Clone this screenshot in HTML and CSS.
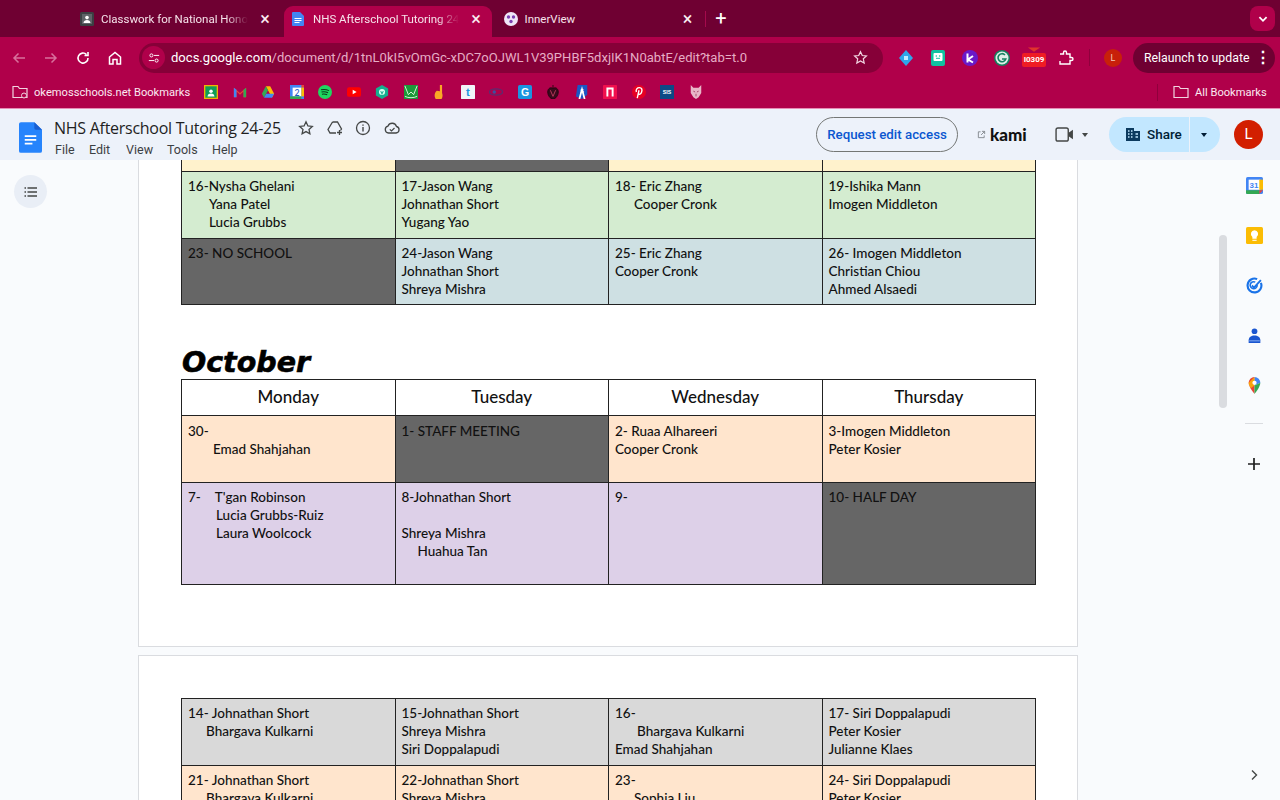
FILE: index.html
```html
<!DOCTYPE html>
<html lang="en">
<head>
<meta charset="utf-8">
<title>NHS Afterschool Tutoring 24-25</title>
<link rel="stylesheet" href="styles.css">
</head>
<body>
<div class="tabstrip">
  <div class="tab tab-first">
    <svg class="fav" viewBox="0 0 14 14"><rect width="14" height="14" rx="1.500" fill="#3c4043"/><rect x="2" y="2" width="10" height="10" fill="#5f6368"/><circle cx="7" cy="5.600" r="1.800" fill="#fff"/><path d="M3.500 11c.3-2.200 1.700-3 3.500-3s3.200.8 3.500 3z" fill="#fff"/></svg>
    <span class="tab-title fade">Classwork for National Honor Society</span>
    <span class="tab-x">×</span>
  </div>
  <div class="tab tab-active">
    <svg class="fav" viewBox="0 0 14 14"><path d="M2 0h7l4 4v9a1 1 0 0 1-1 1H2a1 1 0 0 1-1-1V1a1 1 0 0 1 1-1z" fill="#4285f4"/><path d="M3.500 6.500h7M3.500 8.500h7M3.500 10.500h5" stroke="#fff" stroke-width="1.100"/></svg>
    <span class="tab-title fade">NHS Afterschool Tutoring 24-25</span>
    <span class="tab-x">×</span>
  </div>
  <div class="tab tab-third">
    <svg class="fav" viewBox="0 0 14 14"><circle cx="7" cy="7" r="7" fill="#efe6f7"/><circle cx="4.500" cy="5" r="1.700" fill="#7b3fb0"/><circle cx="9.500" cy="5" r="1.700" fill="#7b3fb0"/><circle cx="7" cy="9.500" r="1.700" fill="#7b3fb0"/></svg>
    <span class="tab-title">InnerView</span>
    <span class="tab-x">×</span>
  </div>
  <span class="tab-sep"></span>
  <span class="tab-plus">+</span>
  <span class="tab-search"><svg viewBox="0 0 10 10" class="chev"><path d="M2 3.500l3 3 3-3" fill="none" stroke="#fff" stroke-width="1.500"/></svg></span>
</div>

<div class="toolbar">
  <svg class="nav dim" viewBox="0 0 16 16"><path d="M14 8H3M7.500 3.500L3 8l4.500 4.500" fill="none" stroke="currentColor" stroke-width="1.500"/></svg>
  <svg class="nav dim" viewBox="0 0 16 16"><path d="M2 8h11M8.500 3.500L13 8l-4.500 4.500" fill="none" stroke="currentColor" stroke-width="1.500"/></svg>
  <svg class="nav" viewBox="0 0 16 16"><path d="M13 8a5 5 0 1 1-1.500-3.500M13 2v3.500H9.500" fill="none" stroke="currentColor" stroke-width="1.600"/></svg>
  <svg class="nav" viewBox="0 0 16 16"><path d="M2.500 7L8 2.500 13.500 7v7H10V9.500H6V14H2.500z" fill="none" stroke="currentColor" stroke-width="1.500"/></svg>
  <div class="omnibox">
    <span class="site-info"><svg viewBox="0 0 14 14" class="tune"><circle cx="4" cy="4" r="1.800" fill="none" stroke="#fff" stroke-width="1.100"/><path d="M7 4h6M1 10h6" stroke="#fff" stroke-width="1.100"/><circle cx="10" cy="10" r="1.800" fill="none" stroke="#fff" stroke-width="1.100"/></svg></span>
    <span class="url"><b>docs.google.com</b>/document/d/1tnL0kI5vOmGc-xDC7oOJWL1V39PHBF5dxjIK1N0abtE/edit?tab=t.0</span>
    <svg class="url-star" viewBox="0 0 16 16"><path d="M8 1.800l1.900 4.100 4.400.5-3.300 3 .9 4.400L8 11.600l-3.900 2.200.9-4.400-3.300-3 4.400-.5z" fill="none" stroke="#f2d6e2" stroke-width="1.300"/></svg>
  </div>
  <div class="exts">
    <svg class="ext" viewBox="0 0 16 16"><path d="M8 0l7 8-7 8-7-8z" fill="#2ea6e8"/><rect x="6" y="6" width="4" height="4" fill="#bfeaff"/></svg>
    <svg class="ext" viewBox="0 0 16 16"><rect x="1" y="0" width="14" height="16" rx="2" fill="#11c2a0"/><rect x="3.500" y="3" width="9" height="8" rx="1" fill="#fff"/><circle cx="6.300" cy="6" r=".8" fill="#11c2a0"/><circle cx="9.700" cy="6" r=".8" fill="#11c2a0"/><path d="M6 8.300h4" stroke="#11c2a0"/></svg>
    <svg class="ext" viewBox="0 0 16 16"><circle cx="8" cy="8" r="8" fill="#6a19c8"/><path d="M5.500 3.500v9M11 6L6 9.500l5 3" fill="none" stroke="#fff" stroke-width="2"/></svg>
    <svg class="ext" viewBox="0 0 16 16"><circle cx="8" cy="8" r="8" fill="#15805f"/><circle cx="8" cy="8" r="6.500" fill="#dfeee8"/><path d="M11 5a4 4 0 1 0 .8 4H8" fill="none" stroke="#15805f" stroke-width="1.600"/></svg>
    <span class="ext-timer"><svg viewBox="0 0 16 6" class="timer-top"><path d="M1 0l7 5 7-5" fill="#e0342c"/></svg><span class="timer-num">I0309</span></span>
    <svg class="ext" viewBox="0 0 16 16"><path d="M2 4h3.500V2.500a1.500 1.500 0 0 1 3 0V4H12v3.500h1.500a1.500 1.500 0 0 1 0 3H12V14H2v-3" fill="none" stroke="#fff" stroke-width="1.400"/></svg>
  </div>
  <span class="tb-sep"></span>
  <span class="tb-avatar">L</span>
  <span class="relaunch">Relaunch to update<span class="kebab">⋮</span></span>
</div>

<div class="bookmarks">
  <span class="bm-folder">
    <svg class="folder" viewBox="0 0 16 14"><path d="M1 12.500V1.500h5l1.500 2H15v9z" fill="none" stroke="#f1d3df" stroke-width="1.200"/><circle cx="12" cy="10.500" r="2.500" fill="#b0004a" stroke="#f1d3df"/></svg>
    okemosschools.net Bookmarks
  </span>
  <span class="bm-icons">
    <svg class="bm" viewBox="0 0 16 16"><rect width="16" height="16" fill="#f4b400"/><rect x="1.500" y="1.500" width="13" height="13" fill="#0f9d58"/><circle cx="8" cy="7" r="2" fill="#fff"/><path d="M4 13c.4-2.500 2-3.200 4-3.200s3.600.7 4 3.200z" fill="#fff"/></svg>
    <svg class="bm" viewBox="0 0 16 16"><path d="M1 14V3l7 6 7-6v11h-3V7.500L8 11 4 7.500V14z" fill="#ea4335"/><path d="M1 14V3l3 2.500V14z" fill="#4285f4"/><path d="M15 14V3l-3 2.500V14z" fill="#34a853"/></svg>
    <svg class="bm" viewBox="0 0 16 16"><path d="M5.500 1.500h5L15 10l-2.500 4.500L8 6z" fill="#fbbc04"/><path d="M5.500 1.500L1 10l2.500 4.500L8 6z" fill="#34a853"/><path d="M3.500 14.500h9L15 10H6z" fill="#4285f4"/></svg>
    <svg class="bm" viewBox="0 0 16 16"><rect width="16" height="16" fill="#4285f4"/><rect x="3" y="3" width="10" height="10" fill="#fff"/><path d="M13 0h3v3h-3z" fill="#ea4335"/><path d="M0 13h13v3H0z" fill="#34a853"/><path d="M13 3h3v10h-3z" fill="#fbbc04"/><text x="8" y="12" class="bm-t cal">2</text></svg>
    <svg class="bm" viewBox="0 0 16 16"><circle cx="8" cy="8" r="8" fill="#1ed760"/><path d="M3.500 5.500c3-.8 6-.6 9 .9M4 8c2.500-.6 5-.4 7.500.8M4.500 10.500c2-.4 4-.3 6 .7" fill="none" stroke="#0a3a1a" stroke-width="1.200"/></svg>
    <svg class="bm" viewBox="0 0 16 16"><rect y="2.500" width="16" height="11" rx="2.500" fill="#f00"/><path d="M6.500 5.500L11 8l-4.500 2.500z" fill="#fff"/></svg>
    <svg class="bm" viewBox="0 0 16 16"><path d="M8 0l7 4v8l-7 4-7-4V4z" fill="#14b08f"/><circle cx="8" cy="8" r="3.500" fill="#d9fff3"/><path d="M6.500 7L8 10l1.500-3" fill="none" stroke="#14b08f" stroke-width="1.200"/></svg>
    <svg class="bm" viewBox="0 0 16 16"><rect width="16" height="16" fill="#1c9a3a"/><path d="M1 1l4 10 3-3 3 3 4-10M1 13c4 2 10 2 14 0" fill="none" stroke="#e8ffe8"/></svg>
    <svg class="bm" viewBox="0 0 16 16"><path d="M9 0h2.500v9a4.500 6 0 1 1-6-2.500L9 7z" fill="#f9a825"/></svg>
    <svg class="bm" viewBox="0 0 16 16"><rect width="16" height="16" rx="1" fill="#f1f5f8"/><text x="8" y="12.500" class="bm-t tee">t</text></svg>
    <svg class="bm" viewBox="0 0 16 16"><ellipse cx="8" cy="8" rx="7.500" ry="3.500" fill="none" stroke="#5b2c6f" stroke-width="1.500"/><circle cx="6" cy="8" r="2" fill="#3d4f9f"/></svg>
    <svg class="bm" viewBox="0 0 16 16"><rect width="16" height="16" rx="2" fill="#1b95e0"/><text x="8" y="12.500" class="bm-t gee">G</text></svg>
    <svg class="bm" viewBox="0 0 16 16"><path d="M8 4c3-2 6 0 6 4s-3 8-6 8-6-4-6-8 3-6 6-4zM8 4V0" fill="#3a0a1c" stroke="#20060f"/><path d="M5 6l3 7 3-7" fill="none" stroke="#c23a60"/></svg>
    <svg class="bm" viewBox="0 0 16 16"><path d="M3 0h11v11l-6 5-7-3z" fill="#1a56c4"/><path d="M5 16l3-11 3 11" fill="none" stroke="#fff" stroke-width="2"/><text x="8" y="9" class="bm-t ess">S</text></svg>
    <svg class="bm" viewBox="0 0 16 16"><rect width="16" height="16" rx="1" fill="#f0104e"/><path d="M5 13V4h6v9" fill="none" stroke="#fff" stroke-width="2.200"/></svg>
    <svg class="bm" viewBox="0 0 16 16"><circle cx="8" cy="8" r="8" fill="#e60023"/><path d="M6 15l2-9M5 8c-1-3 1-5 3.500-5S12 5 11 8s-3 3-3.500 2" fill="none" stroke="#fff" stroke-width="1.600"/></svg>
    <svg class="bm" viewBox="0 0 16 16"><rect width="16" height="16" fill="#0c4a86"/><text x="8" y="10.500" class="bm-t sis">SIS</text></svg>
    <svg class="bm" viewBox="0 0 16 16"><path d="M2 0l3 3h6l3-3v9l-3 5-3 2-3-2-3-5z" fill="#e8b7c7"/><path d="M5 7l2 1M11 7L9 8M8 10v3" stroke="#a0395f"/></svg>
  </span>
  <span class="bm-sep"></span>
  <span class="bm-all">
    <svg class="folder" viewBox="0 0 16 14"><path d="M1 12.500V1.500h5l1.500 2H15v9z" fill="none" stroke="#f1d3df" stroke-width="1.200"/></svg>
    All Bookmarks
  </span>
</div>

<header class="docs-header">
  <svg class="docs-logo" viewBox="0 0 24 32"><path d="M2 0h14l8 8v22a2 2 0 0 1-2 2H2a2 2 0 0 1-2-2V2a2 2 0 0 1 2-2z" fill="#2684fc"/><path d="M16 0l8 8h-6a2 2 0 0 1-2-2z" fill="#1a5fd0"/><path d="M6 14.500h12M6 18.500h12M6 22.500h8" stroke="#fff" stroke-width="1.800"/></svg>
  <div class="doc-meta">
    <div class="doc-title-row">
      <span class="doc-title">NHS Afterschool Tutoring 24-25</span>
      <span class="doc-icons">
        <svg class="hd-ic" viewBox="0 0 16 16"><path d="M8 1.800l1.900 4.100 4.400.5-3.300 3 .9 4.400L8 11.600l-3.900 2.200.9-4.400-3.300-3 4.400-.5z" fill="none" stroke="#444746" stroke-width="1.300"/></svg>
        <svg class="hd-ic" viewBox="0 0 16 16"><path d="M5.500 2h5l4 7-1 1.500M5.500 2L1 9.500 3 13h6" fill="none" stroke="#444746" stroke-width="1.300"/><path d="M12.500 10v5M10 12.500h5" stroke="#444746" stroke-width="1.300"/></svg>
        <svg class="hd-ic" viewBox="0 0 16 16"><circle cx="8" cy="8" r="6.500" fill="none" stroke="#444746" stroke-width="1.300"/><path d="M8 7v4.500M8 4.500v1.300" stroke="#444746" stroke-width="1.400"/></svg>
        <svg class="hd-ic" viewBox="0 0 16 16"><path d="M4.500 13a3.500 3.500 0 0 1-.5-6.900A4.500 4.500 0 0 1 12.500 6.500 3.300 3.300 0 0 1 12 13z" fill="none" stroke="#444746" stroke-width="1.300"/><path d="M5.800 9.300l1.700 1.700 3-3" fill="none" stroke="#444746" stroke-width="1.200"/></svg>
      </span>
    </div>
    <nav class="menu"><span>File</span><span>Edit</span><span>View</span><span>Tools</span><span>Help</span></nav>
  </div>
  <div class="hd-actions">
    <span class="request">Request edit access</span>
    <span class="kami"><svg class="ext-link" viewBox="0 0 10 10"><path d="M4 2H1.500v6.500H8V6M5.500 1.500h3v3M8.500 1.500L4.500 5.500" fill="none" stroke="#80868b"/></svg><b>kami</b></span>
    <span class="meet"><svg class="meet-ic" viewBox="0 0 20 16"><path d="M1 3a2 2 0 0 1 2-2h9a2 2 0 0 1 2 2v10a2 2 0 0 1-2 2H3a2 2 0 0 1-2-2z" fill="none" stroke="#444746" stroke-width="1.500"/><path d="M14 6.500L19 3v10l-5-3.500z" fill="#444746"/></svg><i class="caret"></i></span>
    <span class="share"><span class="share-main"><svg class="bldg" viewBox="0 0 14 13"><path d="M0 0h8v3h6v10H0z" fill="#0b3a5e"/><path d="M2 3h1.500M5 3h1.500M2 6h1.500M5 6h1.500M2 9h1.500M5 9h1.500M9.500 6H12M9.500 9H12" stroke="#c2e7ff" stroke-width="1.300"/></svg>Share</span><span class="share-more"><i class="caret dark"></i></span></span>
    <span class="avatar">L</span>
  </div>
</header>

<div class="workspace">
  <aside class="left-side"><span class="outline-btn"><svg viewBox="0 0 14 10" class="outline-ic"><path d="M3.500 1H13M3.500 5H13M3.500 9H13M.5 1h1.500M.5 5h1.500M.5 9h1.500" stroke="#444746" stroke-width="1.300"/></svg></span></aside>
  <main class="doc">
    <section class="page page-one">
      <table class="cal">
        <tr class="r67">
          <td class="yellow"></td><td class="dark"></td><td class="yellow"></td><td class="yellow"></td>
        </tr>
        <tr class="r67 green">
          <td>16-Nysha Ghelani<br><span class="in21">Yana Patel</span><br><span class="in21">Lucia Grubbs</span></td>
          <td>17-Jason Wang<br>Johnathan Short<br>Yugang Yao</td>
          <td>18- Eric Zhang<br><span class="in19">Cooper Cronk</span></td>
          <td>19-Ishika Mann<br>Imogen Middleton</td>
        </tr>
        <tr class="r66 blue">
          <td class="dark">23- NO SCHOOL</td>
          <td>24-Jason Wang<br>Johnathan Short<br>Shreya Mishra</td>
          <td>25- Eric Zhang<br>Cooper Cronk</td>
          <td>26- Imogen Middleton<br>Christian Chiou<br>Ahmed Alsaedi</td>
        </tr>
      </table>
      <h2 class="month">October</h2>
      <table class="cal">
        <tr class="head">
          <td>Monday</td><td>Tuesday</td><td>Wednesday</td><td>Thursday</td>
        </tr>
        <tr class="r67 orange">
          <td>30-<br><span class="in25">Emad Shahjahan</span></td>
          <td class="dark">1- STAFF MEETING</td>
          <td>2- Ruaa Alhareeri<br>Cooper Cronk</td>
          <td>3-Imogen Middleton<br>Peter Kosier</td>
        </tr>
        <tr class="r102 purple">
          <td>7-<span class="in-tgan">T'gan Robinson</span><br><span class="in28">Lucia Grubbs-Ruiz</span><br><span class="in28">Laura Woolcock</span></td>
          <td>8-Johnathan Short<br><br>Shreya Mishra<br><span class="in16">Huahua Tan</span></td>
          <td>9-</td>
          <td class="dark">10- HALF DAY</td>
        </tr>
      </table>
    </section>
    <section class="page page-two">
      <table class="cal">
        <tr class="r67 gray">
          <td>14- Johnathan Short<br><span class="in18">Bhargava Kulkarni</span></td>
          <td>15-Johnathan Short<br>Shreya Mishra<br>Siri Doppalapudi</td>
          <td>16-<br><span class="in22">Bhargava Kulkarni</span><br>Emad Shahjahan</td>
          <td>17- Siri Doppalapudi<br>Peter Kosier<br>Julianne Klaes</td>
        </tr>
        <tr class="r67 orange">
          <td>21- Johnathan Short<br><span class="in18">Bhargava Kulkarni</span></td>
          <td>22-Johnathan Short<br>Shreya Mishra</td>
          <td>23-<br><span class="in19">Sophia Liu</span></td>
          <td>24- Siri Doppalapudi<br>Peter Kosier</td>
        </tr>
      </table>
    </section>
  </main>
  <aside class="right-side">
    <span class="scrollbar"></span>
    <div class="addons">
      <svg class="addon" viewBox="0 0 16 16"><rect width="16" height="16" rx="1.500" fill="#4285f4"/><rect x="2.500" y="2.500" width="11" height="9.500" fill="#fff"/><path d="M12.500 2.500H16V12h-3.500z" fill="#fbbc04"/><path d="M0 12.500h12.500V16H1.500A1.500 1.500 0 0 1 0 14.500z" fill="#34a853"/><path d="M12.500 12.500H16L12.500 16z" fill="#ea4335"/><text x="7.500" y="10.500" class="bm-t cal31">31</text></svg>
      <svg class="addon" viewBox="0 0 16 16"><rect width="16" height="16" rx="1.500" fill="#fbbc04"/><path d="M8 3a3.500 3.500 0 0 0-2 6.300V11h4V9.300A3.500 3.500 0 0 0 8 3z" fill="#fff"/><path d="M6 12h4v1H6z" fill="#fff"/></svg>
      <svg class="addon" viewBox="0 0 16 16"><path d="M14 5.500A6.500 6.500 0 1 1 10.500 2" fill="none" stroke="#1a73e8" stroke-width="2"/><path d="M10.500 7.500a3.300 3.300 0 1 1-1.800-2.700" fill="none" stroke="#1a73e8" stroke-width="1.500"/><path d="M5.500 8l2 2 6.500-7" fill="none" stroke="#1a73e8" stroke-width="1.800"/></svg>
      <svg class="addon" viewBox="0 0 16 16"><circle cx="8" cy="4" r="2.700" fill="#1a56d0"/><path d="M2.500 15v-2.500C2.500 9.500 5 8 8 8s5.500 1.500 5.500 4.500V15z" fill="#1a56d0"/><path d="M3 13h10" stroke="#7ea6ee"/></svg>
      <svg class="addon" viewBox="0 0 16 16"><path d="M8 0a5.500 5.500 0 0 0-5.500 5.500C2.500 9.500 8 16 8 16z" fill="#ea4335"/><path d="M8 0a5.500 5.500 0 0 1 5.500 5.500L8 8z" fill="#4285f4"/><path d="M13.500 5.500C13.500 9.500 8 16 8 16V8z" fill="#34a853"/><path d="M2.500 5.500C2.500 7 3.500 9 4.500 10.500L8 8V0" fill="#fbbc04" opacity=".8"/><circle cx="8" cy="5.500" r="2" fill="#fff"/></svg>
      <span class="addon-div"></span>
      <svg class="addon plus" viewBox="0 0 14 14"><path d="M7 1v12M1 7h12" stroke="#1f1f1f" stroke-width="1.700"/></svg>
    </div>
    <svg class="collapse" viewBox="0 0 8 12"><path d="M2 1.500L6.500 6 2 10.500" fill="none" stroke="#444746" stroke-width="1.400"/></svg>
  </aside>
</div>
</body>
</html>
```
FILE: styles.css
```css
* { box-sizing: border-box; }
html, body { margin: 0; height: 800px; overflow: hidden; }
body { width: 1280px; font-family: Roboto, "Liberation Sans", sans-serif; color: #1f1f1f; background: #f9fbfd; }

/* Tab strip */
.tabstrip { height: 37px; background: #6f0032; display: flex; align-items: flex-end; padding-left: 72px; color: #f6e3eb; font-size: 11.500px; }
.tab { height: 31px; display: flex; align-items: center; padding-bottom: 6px; }
.tab-first { width: 212px; padding-left: 8px; }
.tab-active { width: 208px; padding-left: 7px; background: #b0004a; border-radius: 9px 9px 0 0; }
.tab-active .fav { margin-right: 8px; }
.tab-third { width: 213px; padding-left: 11.500px; }
.fav { width: 14px; height: 14px; flex: none; margin-right: 7px; }
.tab-title { flex: none; white-space: nowrap; overflow: hidden; }
.tab-first .tab-title { width: 147px; }
.tab-active .tab-title { width: 146px; }
.tab-third .tab-title { width: 157px; }
.fade { -webkit-mask-image: linear-gradient(90deg, #000 85%, transparent 100%); mask-image: linear-gradient(90deg, #000 85%, transparent 100%); }
.tab-x { width: 12px; margin-left: 11px; font-size: 18px; line-height: 14px; text-align: center; color: #fbeef3; }
.tab-third .tab-x { margin-left: 0; }
.tab-sep { width: 1px; height: 16px; background: #a50a4c; margin-bottom: 10px; }
.tab-plus { width: 30px; text-align: center; font-size: 20px; line-height: 24px; height: 31px; color: #fff; }
.tab-search { width: 25px; height: 25px; margin: 6px 5px 0 auto; align-self: flex-start; background: #b0004a; border-radius: 8px; display: flex; align-items: center; justify-content: center; }
.chev { width: 12px; height: 12px; }

/* Toolbar */
.toolbar { height: 39px; background: #b0004a; display: flex; align-items: center; padding: 2px 0 0 11px; color: #fff; }
.nav { width: 16px; height: 16px; margin-right: 16px; flex: none; color: #fff; }
.nav.dim { color: #d8709c; }
.omnibox { width: 744px; height: 30px; border-radius: 15px; background: #860038; display: flex; align-items: center; flex: none; }
.site-info { width: 23px; height: 23px; margin-left: 3px; border-radius: 50%; background: #b0004a; display: flex; align-items: center; justify-content: center; flex: none; }
.tune { width: 12px; height: 12px; }
.url { margin-left: 6px; font-size: 13.050px; color: #e6adc5; white-space: nowrap; flex: 1; overflow: hidden; }
.url b { color: #fff; font-weight: 400; }
.url-star { width: 15px; height: 15px; margin-right: 15px; flex: none; }
.exts { display: flex; align-items: center; margin-left: 15px; gap: 16px; flex: none; }
.ext { width: 16px; height: 16px; flex: none; }
.ext-timer { width: 16px; height: 22px; display: flex; flex-direction: column; align-items: center; flex: none; }
.timer-top { width: 14px; height: 6px; flex: none; }
.timer-num { background: #ef1c24; color: #fff; font-size: 8px; line-height: 14px; width: 24px; height: 14px; text-align: center; font-weight: 700; flex: none; border-radius: 2px; }
.tb-sep { width: 1px; height: 17px; background: #8f003c; margin: 0 14px 0 15px; flex: none; }
.tb-avatar { width: 18px; height: 18px; border-radius: 50%; background: #c8200a; color: #f3c9b8; font-size: 9px; line-height: 18px; text-align: center; flex: none; }
.relaunch { margin-left: 11px; width: 142px; height: 30px; border-radius: 15px; background: #6f0032; color: #fff; font-size: 12.300px; display: flex; align-items: center; padding-left: 11px; flex: none; white-space: nowrap; }
.kebab { font-size: 16px; font-weight: 700; margin-left: 6px; }

/* Bookmarks */
.bookmarks { height: 33px; background: #b0004a; border-bottom: 1px solid #e58db6; display: flex; align-items: center; padding: 0 0 0 12px; color: #fbeaf1; font-size: 11.150px; }
.bm-folder { display: flex; align-items: center; gap: 6px; width: 192px; white-space: nowrap; flex: none; }
.folder { width: 16px; height: 14px; flex: none; }
.bm-icons { display: flex; gap: 14px; align-items: center; flex: none; }
.bm-icons .bm { width: 14px; height: 14px; flex: none; margin: 0 .25px; }
.bm-t { text-anchor: middle; font-family: "Liberation Sans", sans-serif; font-weight: 700; }
.bm-t.cal { font-size: 10px; fill: #1a56c4; }
.bm-t.tee { font-size: 13px; fill: #1b95e0; }
.bm-t.gee { font-size: 12px; fill: #fff; }
.bm-t.ess { font-size: 6px; fill: #fff; }
.bm-t.sis { font-size: 6px; fill: #fff; }
.bm-t.cal31 { font-size: 7.500px; fill: #4285f4; }
.bm-sep { width: 1px; height: 17px; background: #8f003c; margin-left: 454px; flex: none; }
.bm-all { display: flex; align-items: center; gap: 6px; margin-left: 15px; white-space: nowrap; flex: none; }

/* Docs header */
.docs-header { height: 51px; background: #edf2fa; display: flex; align-items: flex-start; padding-left: 19px; }
.docs-logo { width: 23px; height: 31px; margin-top: 13px; flex: none; }
.doc-meta { margin-left: 12px; padding-top: 8px; flex: none; }
.doc-title-row { display: flex; align-items: center; height: 22px; }
.doc-title { font-family: "Open Sans", sans-serif; font-size: 16px; letter-spacing: -.27px; white-space: nowrap; width: 244px; flex: none; color: #1f1f1f; }
.doc-icons { display: flex; gap: 12.600px; }
.hd-ic { width: 16px; height: 16px; flex: none; }
.menu { display: flex; font-size: 12.500px; color: #3c4043; margin-top: 2px; margin-left: 1px; height: 18px; line-height: 18px; }
.menu span:nth-child(1) { width: 34px; }
.menu span:nth-child(2) { width: 37px; }
.menu span:nth-child(3) { width: 41px; }
.menu span:nth-child(4) { width: 45px; }
.hd-actions { display: flex; align-items: center; height: 35px; margin: 8px 0 0 auto; flex: none; }
.request { width: 142px; height: 35px; padding-bottom: 1px; border: 1px solid #747775; border-radius: 18px; color: #0b57d0; font-size: 13.300px; font-weight: 500; display: flex; align-items: center; justify-content: center; white-space: nowrap; }
.kami { display: flex; align-items: center; margin-left: 19px; width: 52px; flex: none; }
.ext-link { width: 9px; height: 9px; margin-right: 4px; flex: none; }
.kami b { font-family: Lato, sans-serif; font-weight: 900; font-size: 17px; color: #111; }
.meet { display: flex; align-items: center; margin-left: 26px; width: 54px; flex: none; }
.meet-ic { width: 19px; height: 15px; flex: none; }
.caret { display: block; width: 0; height: 0; border: 3.500px solid transparent; border-top: 4px solid #444746; border-bottom: 0; margin-left: 8px; }
.caret.dark { border-top-color: #001d35; margin-left: 0; }
.share { display: flex; width: 111px; height: 35px; flex: none; }
.share-main { width: 80px; padding-bottom: 1px; background: #c2e7ff; border-radius: 18px 0 0 18px; display: flex; align-items: center; padding-left: 17px; gap: 7px; font-size: 13.500px; font-weight: 500; color: #001d35; }
.share-more { width: 30px; margin-left: 1px; background: #c2e7ff; border-radius: 0 18px 18px 0; display: flex; align-items: center; justify-content: center; padding-right: 3px; }
.bldg { width: 14px; height: 13px; flex: none; }
.avatar { width: 29px; height: 29px; border-radius: 50%; background: #d21f00; color: #fff; font-size: 15px; text-align: center; line-height: 29px; margin: 0 17px 0 14px; flex: none; }

/* Workspace */
.workspace { height: 640px; display: flex; overflow: hidden; background: #f9fbfd; }
.left-side { width: 138px; flex: none; padding: 15px 0 0 14px; }
.outline-btn { width: 33px; height: 33px; border-radius: 50%; background: #e9eef6; display: flex; align-items: center; justify-content: center; }
.outline-ic { width: 14px; height: 10px; }
.doc { width: 940px; flex: none; margin-top: -56px; }
.page { background: #fff; border: 1px solid #dadce0; padding: 0 42px; }
.page-one { height: 543px; border-top: 0; }
.page-two { margin-top: 8px; padding-top: 42px; border-bottom: 0; height: 400px; }
.cal { width: 855px; table-layout: fixed; border-collapse: collapse; font-family: Lato, sans-serif; font-size: 13.500px; font-weight: 500; line-height: 18px; color: #111; }
.cal td { border: 1px solid #222; padding: 5px 6px 0; vertical-align: top; white-space: nowrap; overflow: hidden; }
.r67 td { height: 67px; }
.r66 td { height: 66px; }
.r102 td { height: 102px; }
.head td { height: 36px; text-align: center; vertical-align: middle; font-size: 17px; padding: 0 0 2px; }
.yellow { background: #fff2cc; }
.green td { background: #d4ecd0; }
.blue td { background: #cee0e3; }
.orange td { background: #ffe5cd; }
.purple td { background: #ddd0e8; }
.gray td { background: #d9d9d9; }
.cal td.dark { background: #666; }
.head + .orange td { padding-top: 6px; }
.month { margin: 40px 0 0 1px; height: 34px; font-family: "DejaVu Sans", sans-serif; font-weight: 700; font-style: italic; font-size: 28.500px; line-height: 35px; color: #000; -webkit-text-stroke: .6px #000; }
.in16 { padding-left: 16px; }
.in18 { padding-left: 18px; }
.in19 { padding-left: 19px; }
.in21 { padding-left: 21px; }
.in22 { padding-left: 22px; }
.in25 { padding-left: 25px; }
.in28 { padding-left: 28px; }
.in-tgan { padding-left: 14px; }

/* Right side */
.right-side { flex: 1; position: relative; }
.scrollbar { position: absolute; left: 141px; top: 75px; width: 8px; height: 173px; border-radius: 4px; background: #dadce0; }
.addons { position: absolute; left: 167px; top: 17px; width: 18px; display: flex; flex-direction: column; align-items: center; gap: 33px; }
.addon { width: 17px; height: 17px; flex: none; }
.addon-div { width: 18px; height: 1px; background: #dadce0; margin-top: -4px; }
.addon.plus { width: 14px; height: 14px; }
.collapse { position: absolute; left: 172px; top: 609px; width: 8px; height: 12px; }
```
